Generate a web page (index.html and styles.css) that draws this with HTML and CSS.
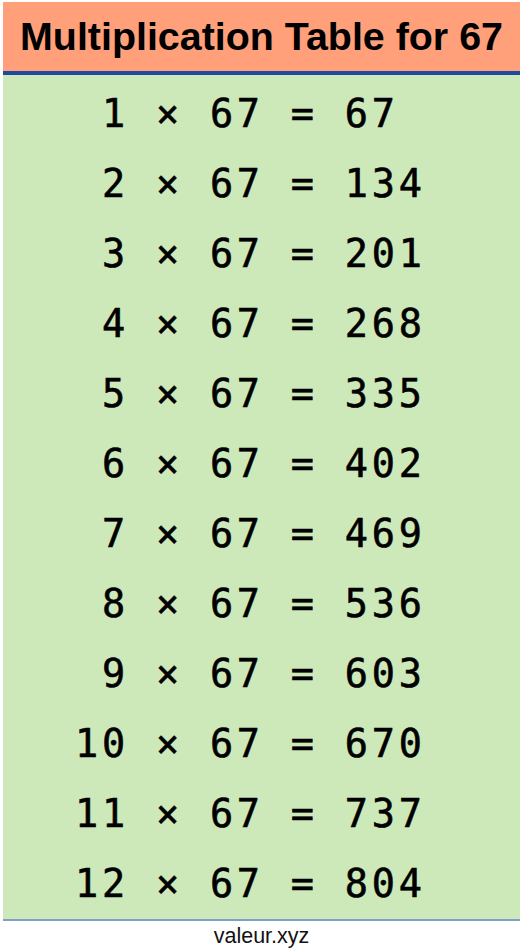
FILE: index.html
```html
<!DOCTYPE html>
<html>
<head>
<meta charset="utf-8">
<title>Multiplication Table for 67</title>
<link rel="stylesheet" href="styles.css">
</head>
<body>
<div class="sheet">
  <header class="title-bar">
    <h1 class="title">Multiplication Table for 67</h1>
  </header>
  <div class="table">
    <div class="row"> 1 × 67 = 67</div>
    <div class="row"> 2 × 67 = 134</div>
    <div class="row"> 3 × 67 = 201</div>
    <div class="row"> 4 × 67 = 268</div>
    <div class="row"> 5 × 67 = 335</div>
    <div class="row"> 6 × 67 = 402</div>
    <div class="row"> 7 × 67 = 469</div>
    <div class="row"> 8 × 67 = 536</div>
    <div class="row"> 9 × 67 = 603</div>
    <div class="row">10 × 67 = 670</div>
    <div class="row">11 × 67 = 737</div>
    <div class="row">12 × 67 = 804</div>
  </div>
  <footer class="footer">valeur.xyz</footer>
</div>
</body>
</html>
```

FILE: styles.css
```css
html, body {
  margin: 0;
  padding: 0;
  background: #ffffff;
  overflow: hidden;
}

.sheet {
  margin: 2px 0 0 3px;
  width: 517px;
}

.title-bar {
  height: 69px;
  background: #ffa07a;
  border-bottom: 4px solid #1d4a9e;
  display: flex;
  align-items: center;
  justify-content: center;
}

.title {
  margin: 0;
  font-family: "Liberation Sans", Arial, sans-serif;
  font-weight: bold;
  font-size: 39.4px;
  color: #000;
  line-height: 1;
}

.table {
  background: #cde8b9;
  border-bottom: 2px solid #7f9fc8;
  padding: 3px 0 1px 72px;
}

.row {
  height: 70px;
  display: flex;
  align-items: center;
  white-space: pre;
  font-family: "DejaVu Sans Mono", monospace;
  font-size: 38.5px;
  letter-spacing: 3.8px;
  color: #000;
  -webkit-text-stroke: 0.6px #000;
}

.footer {
  text-align: center;
  font-family: "Liberation Sans", Arial, sans-serif;
  font-size: 21.5px;
  color: #111;
  padding-top: 3px;
}
```
